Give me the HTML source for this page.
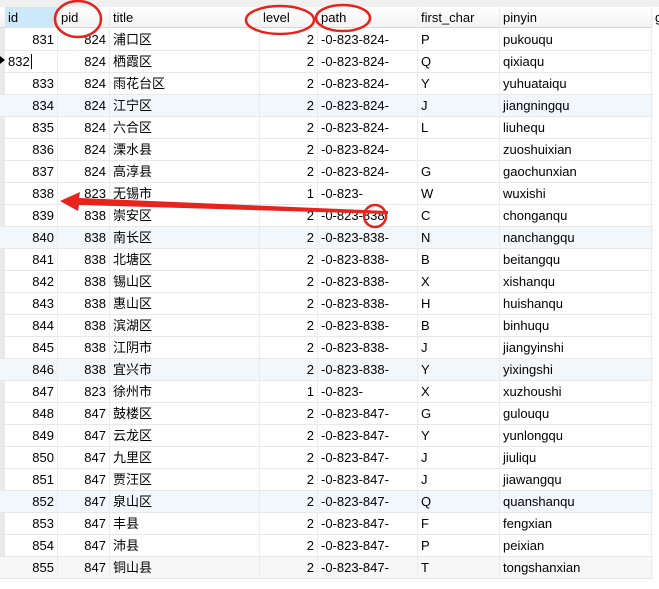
<!DOCTYPE html>
<html><head><meta charset="utf-8"><style>
body{margin:0;width:659px;height:589px;background:#fff;position:relative;overflow:hidden;font-family:"Liberation Sans","Noto Sans CJK SC",sans-serif;font-size:13px;color:#000}
.top{position:absolute;left:0;top:0;width:659px;height:7px;background:#f0f0f0}
.row{position:absolute;left:0;width:653px;height:22px;border-bottom:1px solid #e8e8e8;box-sizing:border-box}
.row div{position:absolute;top:0;height:21px;line-height:21px;border-right:1px solid #ececec;box-sizing:border-box;padding:0 3px;white-space:nowrap}
.hd{height:21px;background:linear-gradient(#fff,#f3f3f3);border-bottom:1px solid #d5d5d5}
.r{text-align:right}
.c0{left:5px;width:53px}.c1{left:58px;width:52px}.c2{left:110px;width:150px}.c3{left:260px;width:58px}.c4{left:318px;width:100px}.c5{left:418px;width:82px}.c6{left:500px;width:152px}
.lb{background:#f2f7fc}
.gut{position:absolute;left:0;top:28px;width:5px;height:551px;background:#eaeaea}
</style></head><body>
<div class="top"></div>
<div class="row hd" style="top:7px"><div class="c0" style="background:#cde8f8">id</div><div class="c1">pid</div><div class="c2">title</div><div class="c3">level</div><div class="c4">path</div><div class="c5">first_char</div><div class="c6">pinyin</div><div style="left:652px;width:10px">g</div></div>
<div class="gut"></div>
<div id="rows"></div>
<script>
var d=[[831,824,"浦口区",2,"-0-823-824-","P","pukouqu"],[832,824,"栖霞区",2,"-0-823-824-","Q","qixiaqu"],[833,824,"雨花台区",2,"-0-823-824-","Y","yuhuataiqu"],[834,824,"江宁区",2,"-0-823-824-","J","jiangningqu"],[835,824,"六合区",2,"-0-823-824-","L","liuhequ"],[836,824,"溧水县",2,"-0-823-824-","","zuoshuixian"],[837,824,"高淳县",2,"-0-823-824-","G","gaochunxian"],[838,823,"无锡市",1,"-0-823-","W","wuxishi"],[839,838,"崇安区",2,"-0-823-838","C","chonganqu"],[840,838,"南长区",2,"-0-823-838-","N","nanchangqu"],[841,838,"北塘区",2,"-0-823-838-","B","beitangqu"],[842,838,"锡山区",2,"-0-823-838-","X","xishanqu"],[843,838,"惠山区",2,"-0-823-838-","H","huishanqu"],[844,838,"滨湖区",2,"-0-823-838-","B","binhuqu"],[845,838,"江阴市",2,"-0-823-838-","J","jiangyinshi"],[846,838,"宜兴市",2,"-0-823-838-","Y","yixingshi"],[847,823,"徐州市",1,"-0-823-","X","xuzhoushi"],[848,847,"鼓楼区",2,"-0-823-847-","G","gulouqu"],[849,847,"云龙区",2,"-0-823-847-","Y","yunlongqu"],[850,847,"九里区",2,"-0-823-847-","J","jiuliqu"],[851,847,"贾汪区",2,"-0-823-847-","J","jiawangqu"],[852,847,"泉山区",2,"-0-823-847-","Q","quanshanqu"],[853,847,"丰县",2,"-0-823-847-","F","fengxian"],[854,847,"沛县",2,"-0-823-847-","P","peixian"],[855,847,"铜山县",2,"-0-823-847-","T","tongshanxian"]];
var h="";var blue={834:1,840:1,846:1,852:1};
d.forEach(function(r,i){var t=29+i*22;var cls="row"+(blue[r[0]]?" lb":"");if(r[0]==855)cls+='" style="background:#f7f7f7;top:'+t+'px';
var id=r[0]==832?'<div class="c0">832<span style="border-left:1px solid #000;margin-left:1px"></span></div>':'<div class="c0 r">'+r[0]+'</div>';
h+='<div class="'+cls+'" style="top:'+t+'px">'+id+'<div class="c1 r">'+r[1]+'</div><div class="c2">'+r[2]+'</div><div class="c3 r">'+r[3]+'</div><div class="c4">'+r[4]+'</div><div class="c5">'+r[5]+'</div><div class="c6">'+r[6]+'</div></div>';});
document.getElementById("rows").innerHTML=h;
</script>
<div style="position:absolute;left:0;top:56px;width:0;height:0;border-left:5px solid #000;border-top:4px solid transparent;border-bottom:4px solid transparent"></div>
<svg style="position:absolute;left:0;top:0" width="659" height="589">
<g fill="none" stroke="#e8231d" stroke-width="2.5">
<ellipse cx="78" cy="19" rx="23" ry="18"/>
<ellipse cx="280" cy="20" rx="34" ry="14"/>
<ellipse cx="343" cy="18" rx="27" ry="13"/>
<circle cx="375" cy="216" r="11"/>
</g>
<polygon points="60,201 80,192 79,198 388,211 388,214 79,205 78,211" fill="#e8231d"/>
</svg>
</body></html>
